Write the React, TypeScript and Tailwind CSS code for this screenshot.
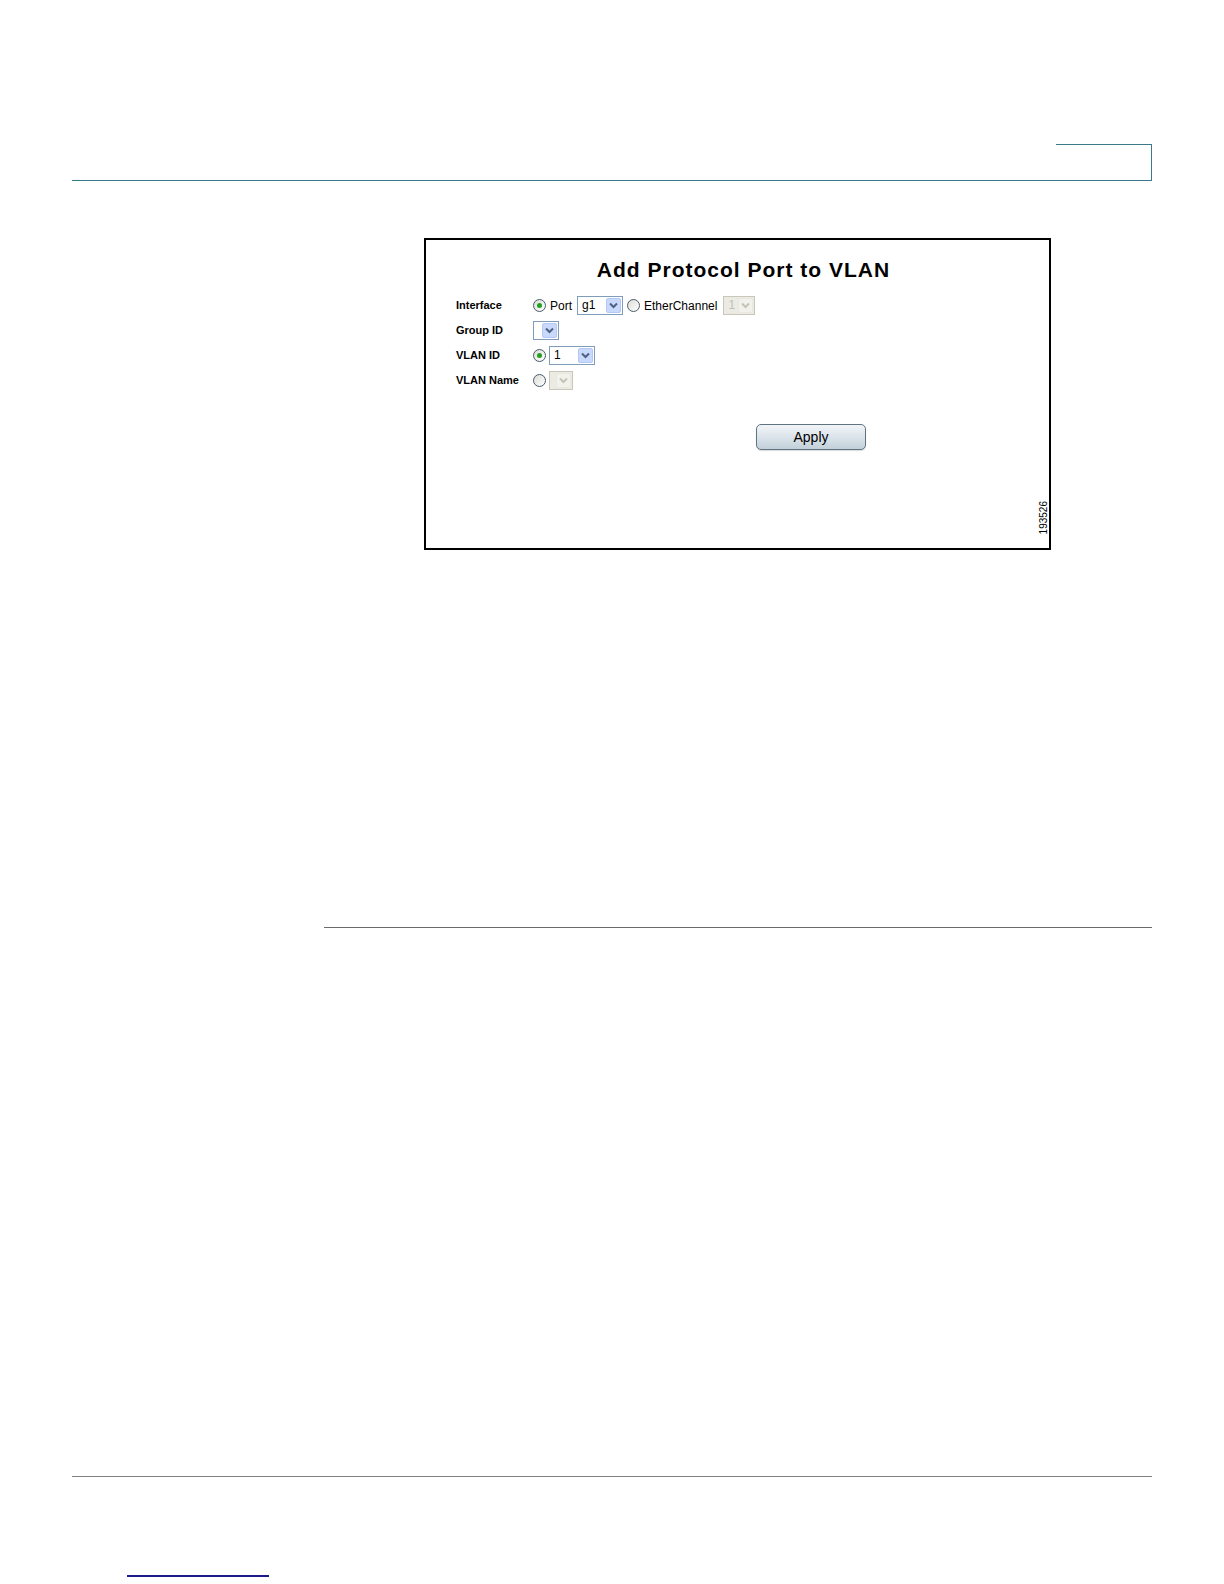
import React from 'react'

const font = { fontFamily: '"Liberation Sans", Arial, sans-serif' }

function Radio({ checked }: { checked?: boolean }) {
  return (
    <span className="flex h-[13px] w-[13px] shrink-0 items-center justify-center rounded-full border border-[#4a5a6a] bg-gradient-to-br from-[#dcdcd6] to-white">
      {checked && <span className="h-[5px] w-[5px] rounded-full bg-[#21a121]" />}
    </span>
  )
}

function Chevron({ disabled }: { disabled?: boolean }) {
  return (
    <svg width="9" height="7" viewBox="0 0 9 7" fill="none">
      <path
        d="M1 1.5 L4.5 5 L8 1.5"
        stroke={disabled ? '#c3c3b8' : '#4d6185'}
        strokeWidth="2"
      />
    </svg>
  )
}

function Select({
  value,
  width,
  disabled,
}: {
  value?: string
  width: string
  disabled?: boolean
}) {
  return (
    <span
      className={`flex h-[19px] items-stretch border p-px ${width} ${
        disabled ? 'border-[#c9c7ba] bg-[#ebebe4]' : 'border-[#7f9db9] bg-white'
      }`}
    >
      <span
        className={`flex-1 pl-[3px] text-[12px] leading-[15px] ${
          disabled ? 'text-[#c0c0b8]' : 'text-black'
        }`}
      >
        {value}
      </span>
      <span
        className={`flex w-[15px] items-center justify-center rounded-[2px] border ${
          disabled ? 'border-[#e8e8e0] bg-[#f2f2ec]' : 'border-[#b4c8f6] bg-[#c9d9fb]'
        }`}
      >
        <Chevron disabled={disabled} />
      </span>
    </span>
  )
}

function Row({ label, children }: { label: string; children: React.ReactNode }) {
  return (
    <div className="flex h-[25px] items-center">
      <div className="w-[77px] text-[11px] font-bold text-black">{label}</div>
      <div className="flex items-center">{children}</div>
    </div>
  )
}

export default function App() {
  return (
    <div className="min-h-[1584px] w-[1224px] bg-white pt-[144px]" style={font}>
      {/* Header rule with tab */}
      <div className="ml-[72px] w-[1080px]">
        <div className="flex justify-end">
          <div className="h-[36px] w-[96px] border-t border-r border-[#3b7a8a]" />
        </div>
        <div className="h-px bg-[#3b7a8a]" />
      </div>

      {/* Figure */}
      <div className="relative ml-[424px] mt-[57px] h-[312px] w-[627px] border-2 border-black">
        <h1 className="pl-[12px] pt-[18px] text-center text-[21px] font-bold leading-[24px] tracking-[1px] text-black">
          Add Protocol Port to VLAN
        </h1>

        <div className="mt-[11px] pl-[30px]">
          <Row label="Interface">
            <Radio checked />
            <span className="ml-[4px] text-[12px]">Port</span>
            <span className="ml-[5px]">
              <Select value="g1" width="w-[46px]" />
            </span>
            <span className="ml-[4px]">
              <Radio />
            </span>
            <span className="ml-[4px] text-[12px]">EtherChannel</span>
            <span className="ml-[6px]">
              <Select value="1" width="w-[32px]" disabled />
            </span>
          </Row>
          <Row label="Group ID">
            <Select width="w-[26px]" />
          </Row>
          <Row label="VLAN ID">
            <Radio checked />
            <span className="ml-[3px]">
              <Select value="1" width="w-[46px]" />
            </span>
          </Row>
          <Row label="VLAN Name">
            <Radio />
            <span className="ml-[3px]">
              <Select width="w-[24px]" disabled />
            </span>
          </Row>
        </div>

        <div className="ml-[330px] mt-[31px]">
          <button className="h-[26px] w-[110px] rounded-[5px] border border-[#5f7480] bg-gradient-to-b from-[#f2f5f7] via-[#dbe4ea] to-[#c2d0da] text-[14px] leading-[24px] text-black shadow-[0_1px_1px_rgba(0,0,0,0.15)]">
            Apply
          </button>
        </div>

        <span className="absolute right-[1px] bottom-[14px] rotate-180 text-[10px] leading-[9px] text-black [writing-mode:vertical-rl]">
          193526
        </span>
      </div>

      {/* Section rule */}
      <div className="ml-[324px] mt-[377px] h-px w-[828px] bg-[#6b6b6b]" />

      {/* Footer rule */}
      <div className="ml-[72px] mt-[548px] h-px w-[1080px] bg-[#808080]" />

      <div className="ml-[127px] mt-[98px] h-[2px] w-[142px] bg-[#1a1a8c]" />
    </div>
  )
}
